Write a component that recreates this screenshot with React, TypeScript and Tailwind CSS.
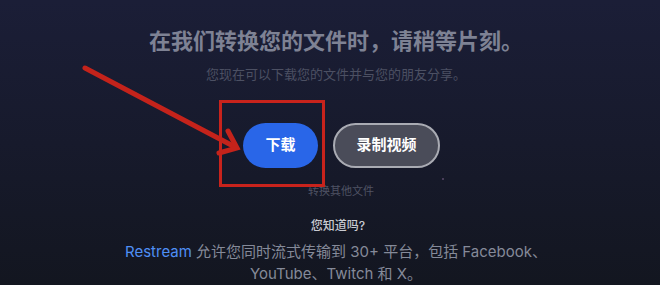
export default function App() {
  return (
    <div className="relative h-[285px] w-[660px] overflow-hidden bg-gradient-to-b from-[#1b1e37] via-[#171a2c] to-[#131620] font-['Inter','Noto_Sans_CJK_SC',sans-serif]">
      <div className="flex flex-col items-center pl-[12px] pt-[26px]">
        <h1 className="text-[22px] font-bold leading-[30px] text-[#7e8294]">
          在我们转换您的文件时，请稍等片刻。
        </h1>
        <p className="mt-[9px] text-[13px] leading-[18px] text-[#4c5063]">
          您现在可以下载您的文件并与您的朋友分享。
        </p>
        <div className="ml-[11px] mt-[40px] flex items-center gap-[15px]">
          <button className="h-[45px] w-[75px] rounded-full bg-[#2966e8] text-[15px] font-bold text-white">
            下载
          </button>
          <button className="h-[45px] w-[107px] rounded-full border-2 border-[#a9abb3] bg-[#4a4c59] text-[15px] font-bold text-white">
            录制视频
          </button>
        </div>
        <p className="ml-[10px] mt-[15px] text-[11px] leading-[16px] text-[#4f5364]">转换其他文件</p>
        <p className="ml-[4px] mt-[19px] text-[12px] font-medium leading-[16px] text-[#c9cbd2]">您知道吗?</p>
        <p className="mt-[7px] w-[440px] text-center text-[15px] leading-[22px] text-[#858a99]">
          <span className="text-[#4f8ff5]">Restream</span> 允许您同时流式传输到 30+ 平台，包括 Facebook、YouTube、Twitch 和 X。
        </p>
      </div>

      {/* annotation: red box + arrow */}
      <div className="absolute left-[219px] top-[100px] h-[87px] w-[106px] border-[3px] border-[#c8231c]" />
      <svg className="absolute left-0 top-0" width="660" height="285" viewBox="0 0 660 285">
        <line x1="85" y1="68" x2="235" y2="147" stroke="#c4231b" strokeWidth="5" strokeLinecap="round" />
        <polyline points="228,131 237,148 219,153" fill="none" stroke="#c4231b" strokeWidth="5" strokeLinejoin="miter" strokeLinecap="round" />
      </svg>
      <div className="absolute left-[442px] top-[178px] h-[2px] w-[2px] rounded-full bg-[#5a4a6a]" />
    </div>
  )
}
